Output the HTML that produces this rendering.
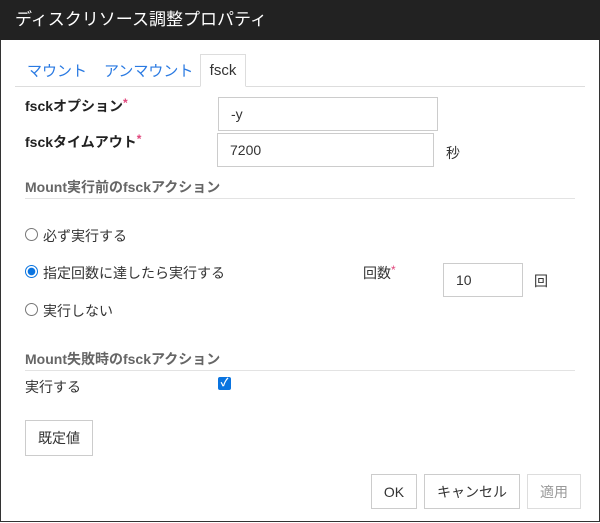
<!DOCTYPE html>
<html><head><meta charset="utf-8"><style>
body{margin:0;width:600px;height:523px;overflow:hidden;background:#fff;font-family:"Liberation Sans","Noto Sans CJK JP",sans-serif;font-size:14px;color:#333}
.a{position:absolute;white-space:nowrap}
.frame{position:absolute;left:0;top:0;width:598px;height:521px;border:1px solid #333;border-top:none}
.title{position:absolute;left:0;top:0;width:600px;height:40px;background:#222;color:#fff;font-size:17px;line-height:40px;text-indent:15px}
.inp{position:absolute;border:1px solid #ccc;box-sizing:border-box;font-size:14px;color:#333;padding-left:12px;display:flex;align-items:center}
.btn{position:absolute;border:1px solid #ccc;box-sizing:border-box;display:flex;align-items:center;justify-content:center;font-size:14px;color:#333;background:#fff}
.h{font-weight:bold;color:#666;font-size:14px}
.line{position:absolute;height:1px;background:#e3e3e3}
.st{color:#e0457b;font-size:12px;vertical-align:top}
.radio{position:absolute;width:13px;height:13px;border:1px solid #777;border-radius:50%;box-sizing:border-box}
</style></head><body>
<div class="frame"></div>
<div class="title">ディスクリソース調整プロパティ</div>
<div class="line" style="left:15px;top:86px;width:570px;background:#ddd"></div>
<div class="a" style="left:27px;top:60px;color:#2a7ae2;font-size:15px">マウント</div>
<div class="a" style="left:104px;top:60px;color:#2a7ae2;font-size:15px">アンマウント</div>
<div class="a" style="left:200px;top:54px;width:46px;height:33px;border:1px solid #ddd;border-bottom:1px solid #fff;box-sizing:border-box;background:#fff;text-align:center;line-height:31px;font-size:15px">fsck</div>
<div class="a" style="left:25px;top:96px;font-weight:bold;color:#222">fsckオプション<span class="st">*</span></div>
<div class="inp" style="left:218px;top:97px;width:220px;height:34px">-y</div>
<div class="a" style="left:25px;top:132px;font-weight:bold;color:#222">fsckタイムアウト<span class="st">*</span></div>
<div class="inp" style="left:217px;top:133px;width:217px;height:34px">7200</div>
<div class="a" style="left:446px;top:143px">秒</div>
<div class="a h" style="left:25px;top:177px">Mount実行前のfsckアクション</div>
<div class="line" style="left:25px;top:198px;width:550px"></div>
<div class="radio" style="left:25px;top:228px"></div>
<div class="a" style="left:43px;top:226px">必ず実行する</div>
<div class="radio" style="left:25px;top:265px;border:1px solid #0a74e0;background:radial-gradient(circle,#0a74e0 45%,#fff 52%)"></div>
<div class="a" style="left:43px;top:263px">指定回数に達したら実行する</div>
<div class="radio" style="left:25px;top:303px"></div>
<div class="a" style="left:43px;top:301px">実行しない</div>
<div class="a" style="left:363px;top:263px">回数<span class="st">*</span></div>
<div class="inp" style="left:443px;top:263px;width:80px;height:34px">10</div>
<div class="a" style="left:534px;top:271px">回</div>
<div class="a h" style="left:25px;top:349px">Mount失敗時のfsckアクション</div>
<div class="line" style="left:25px;top:370px;width:550px"></div>
<div class="a" style="left:25px;top:377px">実行する</div>
<div class="a" style="left:218px;top:377px;width:13px;height:13px;background:#0a74e0;border-radius:2px;color:#fff;font-size:11px;line-height:13px;text-align:center;font-weight:bold">✓</div>
<div class="btn" style="left:25px;top:420px;width:68px;height:36px">既定値</div>
<div class="btn" style="left:371px;top:474px;width:46px;height:35px">OK</div>
<div class="btn" style="left:424px;top:474px;width:96px;height:35px">キャンセル</div>
<div class="btn" style="left:527px;top:474px;width:54px;height:35px;color:#999;border-color:#ddd">適用</div>
</body></html>
